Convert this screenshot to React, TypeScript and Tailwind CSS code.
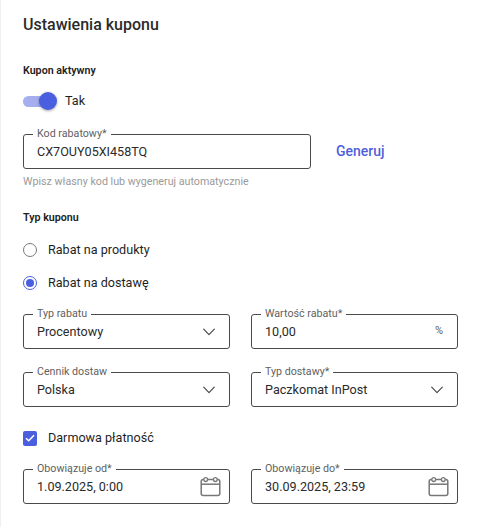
import type { ReactNode } from 'react';

function Chevron() {
  return (
    <svg width="12" height="8" viewBox="0 0 12 8" fill="none" className="shrink-0" aria-hidden="true">
      <path d="M.7 1.2 6 6.6l5.3-5.4" stroke="#4a4a4a" strokeWidth="1.2" strokeLinecap="round" strokeLinejoin="round" />
    </svg>
  );
}

function CalendarIcon() {
  return (
    <svg width="21" height="20" viewBox="0 0 21 20" fill="none" className="shrink-0" aria-hidden="true">
      <rect x="1.2" y="2.6" width="18.6" height="15.8" rx="2" stroke="#777" strokeWidth="1.5" />
      <path d="M1.2 7.2h18.6" stroke="#777" strokeWidth="1.5" />
      <circle cx="5.7" cy="2.6" r="1.9" fill="#fff" stroke="#777" strokeWidth="1.3" />
      <circle cx="15.3" cy="2.6" r="1.9" fill="#fff" stroke="#777" strokeWidth="1.3" />
    </svg>
  );
}

interface FieldProps {
  label: string;
  value: string;
  right?: ReactNode;
  className?: string;
}

function Field({ label, value, right, className }: FieldProps) {
  return (
    <div className={`relative h-[35px] rounded-[3px] border border-[#4a4a4a] pl-[13px] pr-[14px] flex items-center justify-between ${className ?? ''}`}>
      <span className="absolute -top-[8px] left-[9px] bg-white px-[4px] text-[10.7px] leading-[14px] text-[#5f5f5f]">{label}</span>
      <span className="text-[12.6px] leading-[20px] text-[#2b2b2b]">{value}</span>
      {right}
    </div>
  );
}

export default function App() {
  return (
    <div className="h-[527px] w-[489px] overflow-hidden bg-white border-l border-[#f0f0f0] pl-[22px] font-['Roboto',sans-serif]">
      <h1 className="pt-[15px] text-[16px] leading-[20px] font-medium text-[#2b2b2b]">Ustawienia kuponu</h1>

      <p className="mt-[28px] text-[10.7px] leading-[16px] font-semibold text-[#222]">Kupon aktywny</p>

      <div className="mt-[12px] flex items-center h-[20px]">
        <div className="relative h-[11px] w-[32px] rounded-full bg-[#a6aef0]">
          <div className="absolute -top-[4px] left-[16px] size-[18px] rounded-full bg-[#4a5fe0] shadow-[0_1px_3px_rgba(0,0,0,0.35)]" />
        </div>
        <span className="ml-[10px] text-[12.6px] leading-[20px] text-[#1f1f1f]">Tak</span>
      </div>

      <div className="mt-[23px] flex items-center">
        <Field label="Kod rabatowy*" value="CX7OUY05XI458TQ" className="w-[288px]" />
        <button type="button" className="ml-[25px] text-[14px] font-medium text-[#4f5fdc]">Generuj</button>
      </div>

      <p className="mt-[5px] text-[10.7px] leading-[16px] text-[#9a9a9a]">Wpisz własny kod lub wygeneruj automatycznie</p>

      <p className="mt-[20px] text-[10.7px] leading-[16px] font-semibold text-[#222]">Typ kuponu</p>

      <div className="mt-[14px] flex items-center h-[20px]">
        <span className="size-[14px] rounded-full border border-[#7a7a7a]" />
        <span className="ml-[11px] text-[12.6px] leading-[20px] text-[#1f1f1f]">Rabat na produkty</span>
      </div>

      <div className="mt-[13px] flex items-center h-[20px]">
        <span className="size-[14px] rounded-full border border-[#4a5fe0] flex items-center justify-center">
          <span className="size-[8px] rounded-full bg-[#4a5fe0]" />
        </span>
        <span className="ml-[11px] text-[12.6px] leading-[20px] text-[#1f1f1f]">Rabat na dostawę</span>
      </div>

      <div className="mt-[21px] grid grid-cols-[207px_207px] gap-x-[21px] gap-y-[23px]">
        <Field label="Typ rabatu" value="Procentowy" right={<Chevron />} />
        <Field label="Wartość rabatu*" value="10,00" right={<span className="text-[11px] text-[#5f5f5f]">%</span>} />
        <Field label="Cennik dostaw" value="Polska" right={<Chevron />} />
        <Field label="Typ dostawy*" value="Paczkomat InPost" right={<Chevron />} />
      </div>

      <div className="mt-[21px] flex items-center h-[20px]">
        <span className="h-[15px] w-[14px] rounded-[2px] bg-[#4a5fe0] flex items-center justify-center">
          <svg width="10" height="8" viewBox="0 0 10 8" fill="none" aria-hidden="true">
            <path d="M1 4.2 3.7 6.8 9 1.2" stroke="#fff" strokeWidth="1.5" />
          </svg>
        </span>
        <span className="ml-[11px] text-[12.6px] leading-[20px] text-[#1f1f1f]">Darmowa płatność</span>
      </div>

      <div className="mt-[21px] grid grid-cols-[207px_207px] gap-x-[21px]">
        <Field label="Obowiązuje od*" value="1.09.2025, 0:00" right={<span className="-mr-[5px] translate-x-[1px]"><CalendarIcon /></span>} />
        <Field label="Obowiązuje do*" value="30.09.2025, 23:59" right={<span className="-mr-[5px] translate-x-[1px]"><CalendarIcon /></span>} />
      </div>
    </div>
  );
}
